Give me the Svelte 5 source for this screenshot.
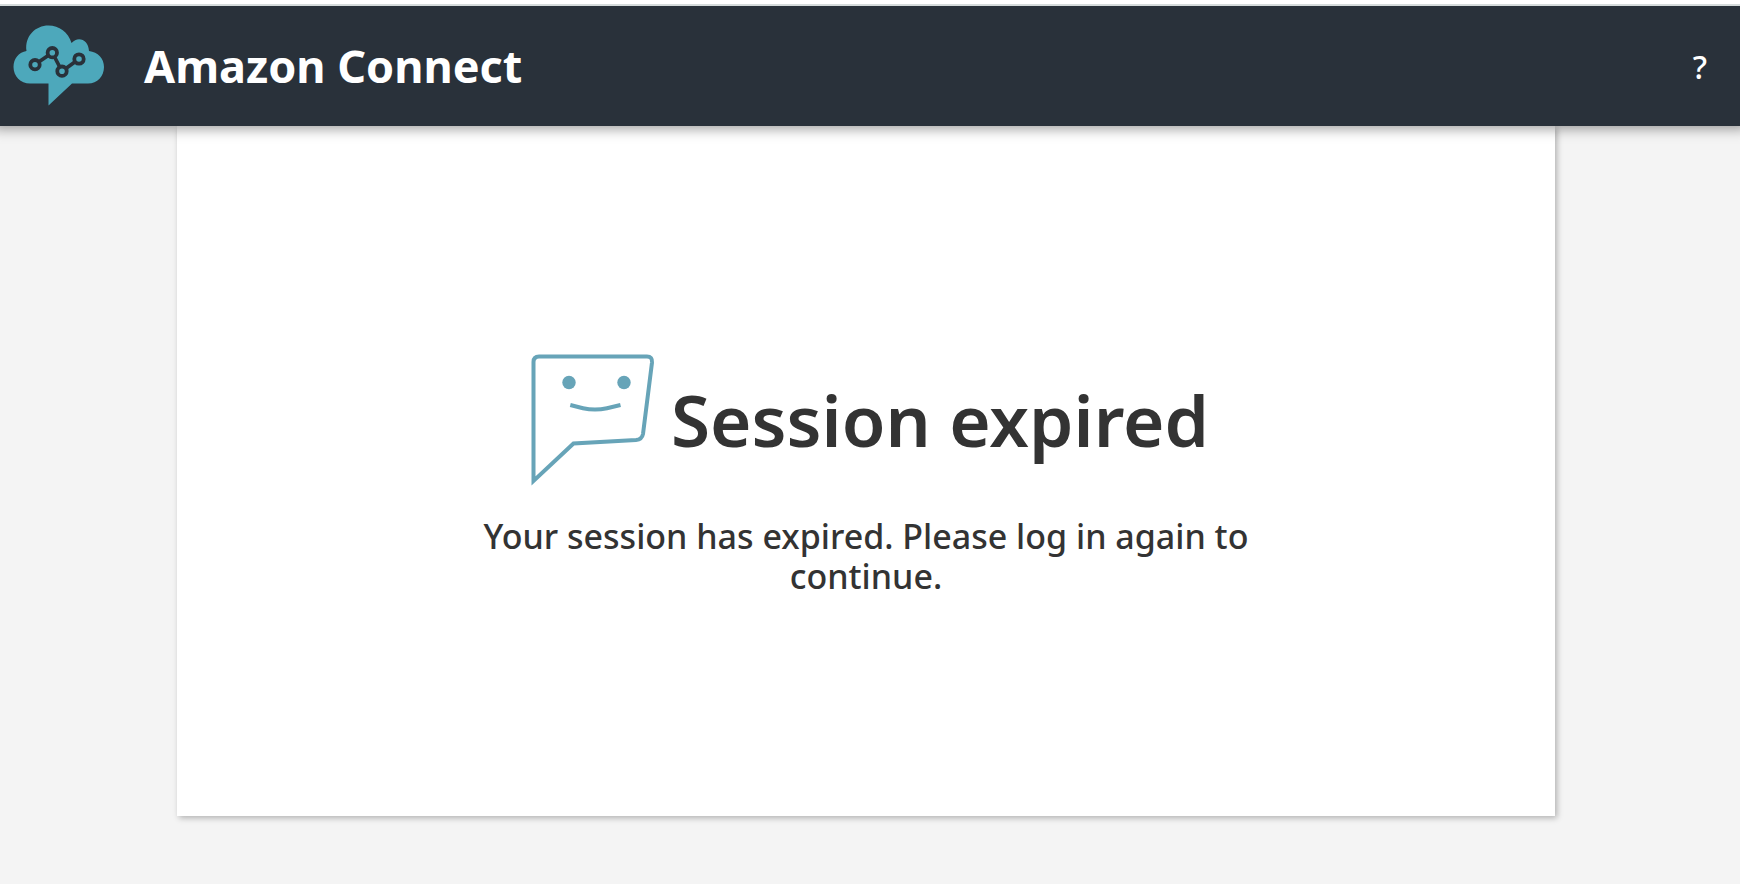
<script>
  const title = 'Session expired';
  const message = 'Your session has expired. Please log in again to continue.';
</script>

<div class="page">
  <header>
    <a class="brand" href="#home" aria-label="Amazon Connect home">
      <svg width="92" height="82" viewBox="13 25 92 82" aria-hidden="true">
        <path
          fill="#4da8bb"
          d="M30 83.500C20.500 83.500 13.500 76 13.500 67C13.500 58.500 19 52 26.500 51C24.500 36 35.500 25.500 48.500 25.500C59 25.500 68.500 32.500 71.500 43C78 35.500 88.500 39.500 89 51C98 52 104 58.500 104 67C104 76 97.500 83.500 88 83.500H72L48.500 105.500V83.500Z"
        />
        <g fill="none" stroke="#29313a">
          <path stroke-width="3.600" d="M35 64.500L52.300 52.700L62 71.300L79 59" />
          <g fill="#4da8bb" stroke-width="3.800">
            <circle cx="35" cy="64.700" r="4.700" />
            <circle cx="52.300" cy="52.700" r="4.700" />
            <circle cx="62" cy="71.200" r="4.700" />
            <circle cx="79" cy="59" r="4.700" />
          </g>
        </g>
      </svg>
      <span>Amazon Connect</span>
    </a>
    <button type="button" aria-label="Help">?</button>
  </header>

  <main>
    <section>
      <div class="heading">
        <svg width="124" height="132" viewBox="530 354 124 132" aria-hidden="true">
          <g fill="none" stroke="#67a4b8" stroke-width="4">
            <path
              d="M532.500 481V362Q532.500 356.500 538 356.500H646Q651.500 356.500 651 362.500L642 434Q641 439.500 635 440L572.500 443.500Z"
            />
            <path d="M569.300 405L582 408.200Q594 411 606 408.200L619.500 405" />
          </g>
          <g fill="#67a4b8">
            <circle cx="568" cy="382.500" r="6.700" />
            <circle cx="623" cy="382.500" r="6.700" />
          </g>
        </svg>
        <h1>{title}</h1>
      </div>
      <p>{message}</p>
    </section>
  </main>
</div>

<style>
  :global(body) {
    margin: 0;
    background: #f4f4f4;
  }

  .page {
    display: flex;
    flex-direction: column;
    min-height: 100vh;
    font-family: 'Noto Sans', 'Open Sans', sans-serif;
    color: #333;
  }

  .page::before {
    content: '';
    position: relative;
    z-index: 1;
    height: 4px;
    background: #fff;
  }

  header {
    position: relative;
    display: flex;
    align-items: center;
    justify-content: space-between;
    height: 120px;
    padding: 0 24px 0 13px;
    border-top: 2px solid #d5dbdb;
    background: #29313a;
    box-shadow: 0 -4px 12px 7px rgba(0, 0, 0, 0.38);
  }

  .brand {
    display: flex;
    align-items: center;
    gap: 39px;
    color: #fff;
    font-size: 45px;
    font-weight: 700;
    line-height: 60px;
    text-decoration: none;
  }

  button {
    width: 32px;
    padding: 2px 0 0;
    border: 0;
    background: none;
    color: #fff;
    font: 500 32px/48px 'Noto Sans', sans-serif;
  }

  main {
    padding: 0 185px 68px 177px;
  }

  section {
    display: flex;
    flex-direction: column;
    align-items: center;
    padding: 228px 24px 220px;
    background: #fff;
    box-shadow: 2px 2px 6px rgba(0, 0, 0, 0.28);
  }

  .heading {
    display: flex;
    align-items: center;
    gap: 16px;
    padding-left: 8px;
  }

  h1 {
    margin: 0;
    font-size: 71px;
    font-weight: 600;
    line-height: 132px;
  }

  p {
    max-width: 800px;
    margin: 30px 0 0;
    font-size: 34px;
    font-weight: 500;
    line-height: 40px;
    text-align: center;
  }
</style>
